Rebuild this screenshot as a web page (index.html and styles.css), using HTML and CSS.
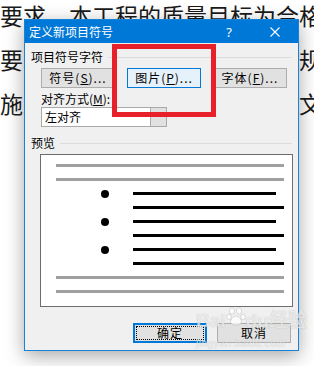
FILE: index.html
```html
<!DOCTYPE html>
<html lang="zh-CN">

<head>
  <meta charset="UTF-8" />
  <title>定义新项目符号</title>
  <link rel="stylesheet" href="styles.css">
</head>

<body>
  <div class="doc">
    <p>要求，本工程的质量目标为合格标准</p>
    <p>要求：严格执行国家现行施工规范</p>
    <p>施工，要确保工程施工安全和文明</p>
  </div>

  <div class="dialog">
    <div class="titlebar">
      <span class="title">定义新项目符号</span>
      <span class="tb-btn">?</span>
      <span class="tb-btn">
        <svg width="10" height="10" viewBox="0 0 10 10"><path d="M0.5 0.5L9.5 9.5M9.5 0.5L0.5 9.5" stroke="#fff" stroke-width="1.1" fill="none" /></svg>
      </span>
    </div>

    <div class="dlg-body">
      <div class="group-head"><span>项目符号字符</span><i class="rule"></i></div>
      <div class="btn-row">
        <div class="btn">符号(<u>S</u>)...</div>
        <div class="btn btn-hot">图片(<u>P</u>)...</div>
        <div class="btn">字体(<u>F</u>)...</div>
      </div>

      <div class="field-label">对齐方式(<u>M</u>):</div>
      <div class="combo"><span class="combo-text">左对齐</span><span class="combo-btn"></span></div>

      <div class="group-head preview-head"><span>预览</span><i class="rule"></i></div>
      <div class="preview">
        <div class="pv-row"><i class="pv-gray"></i></div>
        <div class="pv-row"><i class="pv-gray"></i></div>
        <div class="pv-row"><i class="pv-dot"></i><i class="pv-line"></i></div>
        <div class="pv-row"><i class="pv-line"></i></div>
        <div class="pv-row"><i class="pv-dot"></i><i class="pv-line"></i></div>
        <div class="pv-row"><i class="pv-line"></i></div>
        <div class="pv-row"><i class="pv-dot"></i><i class="pv-line"></i></div>
        <div class="pv-row"><i class="pv-line"></i></div>
        <div class="pv-row"><i class="pv-gray"></i></div>
        <div class="pv-row"><i class="pv-gray"></i></div>
      </div>

      <div class="actions">
        <div class="btn btn-default"><span class="focus">确定</span></div>
        <div class="btn">取消</div>
      </div>
    </div>
  </div>

  <!-- annotation box drawn over the screenshot -->
  <div class="highlight"></div>

  <div class="watermark">
    <div class="wm-logo">
      <span>Bai</span>
      <svg width="20" height="20" viewBox="0 0 20 20">
        <g fill="rgba(255,255,255,0.75)" stroke="rgba(0,0,0,0.12)" stroke-width="1">
          <ellipse cx="6" cy="5" rx="2.6" ry="3.2" />
          <ellipse cx="13" cy="5" rx="2.6" ry="3.2" />
          <ellipse cx="3" cy="11" rx="2.3" ry="2.8" />
          <ellipse cx="17" cy="11" rx="2.3" ry="2.8" />
          <path d="M10 10c-3 0-5.5 4-5.5 6 0 2 2 3 5.5 3s5.5-1 5.5-3c0-2-2.5-6-5.5-6z" />
        </g>
      </svg>
      <span>du经验</span>
    </div>
    <div class="wm-url">jingyan.baidu.com</div>
  </div>
</body>

</html>
```

FILE: styles.css
```css
* {
  margin: 0;
  padding: 0;
  box-sizing: border-box;
}

html, body {
  width: 100%;
  height: 100%;
  overflow: hidden;
  background: #fff;
}

body {
  position: relative;
  font-family: "Noto Sans CJK SC", sans-serif;
}

/* document text behind the dialog */
.doc {
  width: 100%;
  margin-top: -7px;
  overflow: hidden;
  font-size: 23px;
  line-height: 44px;
  color: #1a1a1a;
  white-space: nowrap;
}

.dialog {
  position: absolute;
  left: 24px;
  top: 19px;
  width: 275px;
  height: 332px;
  border: 1px solid #1583d8;
  background: #f0f0f0;
  box-shadow: 0 5px 18px rgba(0, 0, 0, 0.35);
  display: flex;
  flex-direction: column;
  font-size: 12px;
  color: #000;
}

.titlebar {
  height: 23px;
  background: #0078d7;
  color: #fff;
  display: flex;
  align-items: center;
}

.title {
  flex: 1;
  padding-left: 4px;
  font-size: 12px;
}

.tb-btn {
  width: 46px;
  height: 23px;
  display: flex;
  align-items: center;
  justify-content: center;
  font-family: "Noto Sans", sans-serif;
  font-size: 13px;
}

.dlg-body {
  flex: 1;
  padding: 0 6px;
  display: flex;
  flex-direction: column;
}

.group-head {
  margin-top: 6px;
  height: 16px;
  line-height: 16px;
  display: flex;
  align-items: center;
}

.group-head .rule {
  flex: 1;
  height: 1px;
  margin-left: 5px;
  background: #dcdcdc;
}

.preview-head {
  margin-top: 8px;
}

.btn-row {
  margin-top: 3px;
  padding-left: 10px;
  display: flex;
  gap: 12px;
}

.btn {
  width: 74px;
  height: 20px;
  border: 1px solid #adadad;
  background: #e1e1e1;
  display: flex;
  align-items: center;
  justify-content: center;
  letter-spacing: 1px;
  line-height: 16px;
}

.btn-hot {
  border-color: #0078d7;
  background: #e5f1fb;
}

.btn-default {
  border: 2px solid #0078d7;
  padding: 1px;
}

.focus {
  flex: 1;
  align-self: stretch;
  border: 1px dotted #000;
  display: flex;
  align-items: center;
  justify-content: center;
}

.field-label {
  margin-top: 3px;
  padding-left: 10px;
  height: 16px;
  line-height: 16px;
}

.combo {
  margin-left: 10px;
  width: 126px;
  height: 20px;
  border: 1px solid #a9a9a9;
  background: #fff;
  display: flex;
}

.combo-text {
  flex: 1;
  padding-left: 3px;
  line-height: 18px;
}

.combo-btn {
  width: 16px;
  background: #e1e1e1;
  border-left: 1px solid #adadad;
}

.preview {
  margin: 3px 0 0 9px;
  width: 253px;
  height: 153px;
  border: 1px solid #6d6d6d;
  background: #fff;
  padding: 9px 0 0 15px;
}

.pv-row {
  height: 3px;
  margin-top: 11px;
  display: flex;
  align-items: center;
}

.pv-row:first-child {
  margin-top: 0;
}

.pv-gray {
  width: 228px;
  height: 3px;
  background: #a0a0a0;
}

.pv-dot {
  flex: none;
  width: 8px;
  height: 8px;
  margin-left: 45px;
  border-radius: 50%;
  background: #000;
}

.pv-line {
  width: 151px;
  height: 3px;
  margin-left: 77px;
  background: #000;
}

.pv-dot + .pv-line {
  width: 143px;
  margin-left: 24px;
}

.actions {
  margin-top: 16px;
  padding-right: 1px;
  display: flex;
  justify-content: flex-end;
  gap: 10px;
}

.highlight {
  position: absolute;
  left: 112px;
  top: 44px;
  width: 104px;
  height: 73px;
  border: 5px solid #e8202a;
}

.watermark {
  position: absolute;
  left: 196px;
  top: 306px;
  color: rgba(255, 255, 255, 0.7);
  text-shadow: 0 0 1px rgba(0, 0, 0, 0.25);
  font-family: "Liberation Sans", sans-serif;
}

.wm-logo {
  display: flex;
  align-items: flex-end;
  font-size: 19px;
  font-weight: bold;
  line-height: 30px;
}

.wm-logo svg {
  margin-bottom: 10px;
}

.wm-url {
  margin-top: 2px;
  font-size: 10px;
  letter-spacing: 0.5px;
}
```
